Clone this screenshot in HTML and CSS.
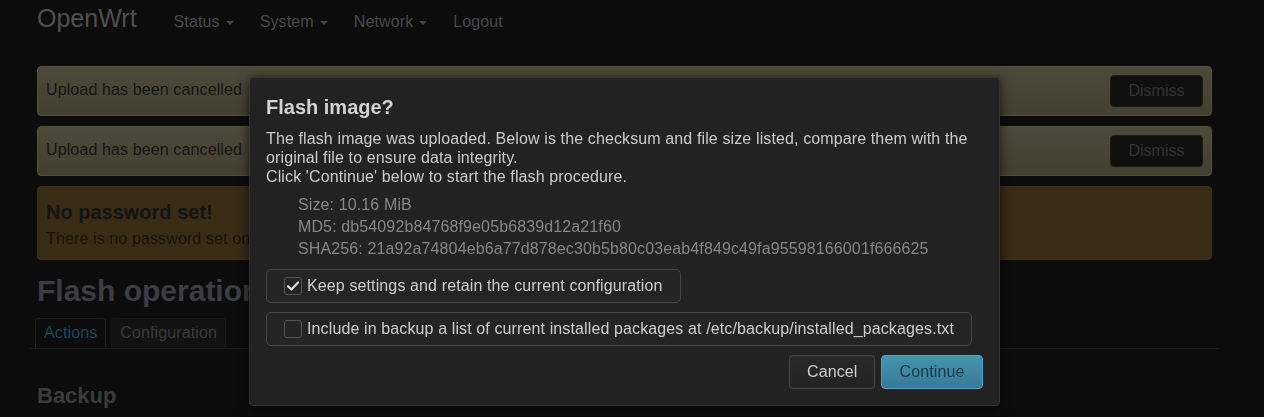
FILE: index.html
```html
<!DOCTYPE html>
<html lang="en">
<head>
<meta charset="utf-8">
<title>OpenWrt - Flash operations</title>
<link rel="stylesheet" href="styles.css">
</head>
<body>
<header class="topbar">
  <a class="brand">OpenWrt</a>
  <nav class="menu">
    <a class="menu-item">Status <span class="caret"></span></a>
    <a class="menu-item">System <span class="caret"></span></a>
    <a class="menu-item">Network <span class="caret"></span></a>
    <a class="menu-item">Logout</a>
  </nav>
</header>

<main class="container">
  <div class="alert alert-info">
    <span class="alert-text">Upload has been cancelled</span>
    <button class="btn-dismiss">Dismiss</button>
  </div>
  <div class="alert alert-info">
    <span class="alert-text">Upload has been cancelled</span>
    <button class="btn-dismiss">Dismiss</button>
  </div>
  <div class="alert alert-warn">
    <h4 class="alert-title">No password set!</h4>
    <p class="alert-body">There is no password set on this router. Please configure a root password to protect the web interface.</p>
  </div>

  <h2 class="page-title">Flash operations</h2>
  <ul class="tabs">
    <li class="tab tab-active">Actions</li>
    <li class="tab">Configuration</li>
  </ul>
  <h3 class="section-title">Backup</h3>
</main>

<div class="overlay">
  <div class="modal">
    <h4 class="modal-title">Flash image?</h4>
    <p class="modal-text">The flash image was uploaded. Below is the checksum and file size listed, compare them with the original file to ensure data integrity.<br>Click 'Continue' below to start the flash procedure.</p>
    <ul class="sums">
      <li>Size: 10.16 MiB</li>
      <li>MD5: db54092b84768f9e05b6839d12a21f60</li>
      <li>SHA256: 21a92a74804eb6a77d878ec30b5b80c03eab4f849c49fa95598166001f666625</li>
    </ul>
    <label class="option">
      <span class="checkbox checked"><svg viewBox="0 0 18 18" width="18" height="18"><path d="M4 9.2 L7.4 12.4 L14 5.4" fill="none" stroke="#e0e0e0" stroke-width="2.2" stroke-linecap="round" stroke-linejoin="round"/></svg></span>
      <span>Keep settings and retain the current configuration</span>
    </label>
    <label class="option">
      <span class="checkbox"></span>
      <span>Include in backup a list of current installed packages at /etc/backup/installed_packages.txt</span>
    </label>
    <div class="modal-actions">
      <button class="btn btn-cancel">Cancel</button>
      <button class="btn btn-primary">Continue</button>
    </div>
  </div>
</div>
</body>
</html>
```

FILE: styles.css
```css
* { box-sizing: border-box; }

html, body {
  margin: 0;
  padding: 0;
  background: #0c0c0c;
  font-family: "Liberation Sans", Arial, sans-serif;
  font-size: 16px;
  line-height: 18px;
  letter-spacing: 0.12px;
  color: #3c3c3c;
  overflow: hidden;
  height: 417px;
}

/* top bar */
.topbar {
  display: flex;
  align-items: baseline;
  height: 48px;
  padding: 4px 0 0 37px;
}
.brand {
  font-size: 25px;
  line-height: 28px;
  letter-spacing: 0;
  color: #4f4f4f;
  margin-right: 37px;
}
.menu {
  display: flex;
}
.menu-item {
  color: #494949;
  margin-right: 26px;
  display: inline-flex;
  align-items: center;
}
.caret {
  display: inline-block;
  width: 0;
  height: 0;
  margin-left: 6px;
  margin-top: 2px;
  border-left: 4.5px solid transparent;
  border-right: 4.5px solid transparent;
  border-top: 4.5px solid #444;
}

/* content */
.container {
  padding: 18px 52px 0 37px;
}
.alert {
  border: 1px solid #545039;
  border-radius: 4px;
  margin-bottom: 10px;
}
.alert-info {
  display: flex;
  justify-content: space-between;
  align-items: flex-start;
  padding: 8px;
  background: linear-gradient(#4d493a, #444030);
  border-color: #545040;
}
.alert-text {
  color: #141414;
  padding-top: 6px;
}
.btn-dismiss {
  font: inherit;
  height: 32px;
  width: 93px;
  background: #0f0f0e;
  border: 1px solid #1d1c18;
  border-radius: 4px;
  color: #333;
  padding: 0;
}
.alert-warn {
  background: #382c15;
  border-color: #3b2f17;
  padding: 13px 8px 11px;
  height: 74px;
}
.alert-title {
  margin: 0 0 5px;
  font-size: 20px;
  line-height: 24px;
  letter-spacing: 0;
  color: #151311;
}
.alert-body {
  margin: 0;
  line-height: 19px;
  color: #16130c;
  white-space: nowrap;
  overflow: hidden;
}

.page-title {
  margin: 13px 0 9px;
  font-size: 30px;
  line-height: 36px;
  letter-spacing: 0;
  color: #393d44;
}
.tabs {
  display: flex;
  gap: 5px;
  list-style: none;
  margin: 0 -7px 0 -7px;
  padding: 0 0 0 5px;
  border-bottom: 1px solid #1c1c1c;
}
.tab {
  padding: 5px 8px 6px;
  border: 1px solid #181818;
  border-bottom: none;
  border-radius: 4px 4px 0 0;
  background: #121212;
  color: #3a3a3a;
}
.tab-active {
  background: #0c0c0c;
  border-color: #1f1f1f;
  color: #1c4658;
}
.section-title {
  margin: 34px 0 0;
  font-size: 22px;
  line-height: 26px;
  letter-spacing: 0;
  color: #3b3b3b;
}

/* modal */
.overlay {
  position: fixed;
  inset: 0;
}
.modal {
  position: absolute;
  left: 249px;
  top: 77px;
  width: 751px;
  background: #222;
  border: 1px solid #343434;
  border-radius: 4px;
  box-shadow: 0 2px 12px rgba(0, 0, 0, 0.7);
  padding: 16px;
  color: #cacaca;
}
.modal-title {
  margin: 0 0 9px;
  font-size: 20px;
  line-height: 26px;
  letter-spacing: 0;
  color: #d2d2d2;
}
.modal-text {
  margin: 0 0 8px;
  line-height: 19px;
  color: #cbcbcb;
}
.sums {
  list-style: none;
  margin: 0 0 9px;
  padding: 0 0 0 32px;
  line-height: 22px;
  color: #868686;
}
.option {
  display: flex;
  align-items: center;
  gap: 5px;
  width: max-content;
  padding: 7px 17px 7px 17px;
  border: 1px solid #474747;
  border-radius: 5px;
  background: #242424;
  color: #cdcdcd;
  margin-bottom: 9px;
}
.checkbox {
  display: inline-block;
  width: 18px;
  height: 18px;
  border: 1px solid #555;
  border-radius: 3px;
  background: #242424;
  position: relative;
}
.checkbox svg {
  position: absolute;
  left: -1px;
  top: -1px;
}
.modal-actions {
  display: flex;
  justify-content: flex-end;
  gap: 6px;
  margin-top: 9px;
}
.btn {
  font: inherit;
  letter-spacing: 0.12px;
  height: 34px;
  padding: 0 17px;
  border-radius: 4px;
}
.btn-cancel {
  width: 86px;
  background: linear-gradient(#282828, #232323);
  border: 1px solid #484848;
  color: #cfcfcf;
}
.btn-primary {
  width: 102px;
  background: linear-gradient(#4593af, #367b95);
  border: 1px solid #4aa6c6;
  color: #1c3a48;
}
```
